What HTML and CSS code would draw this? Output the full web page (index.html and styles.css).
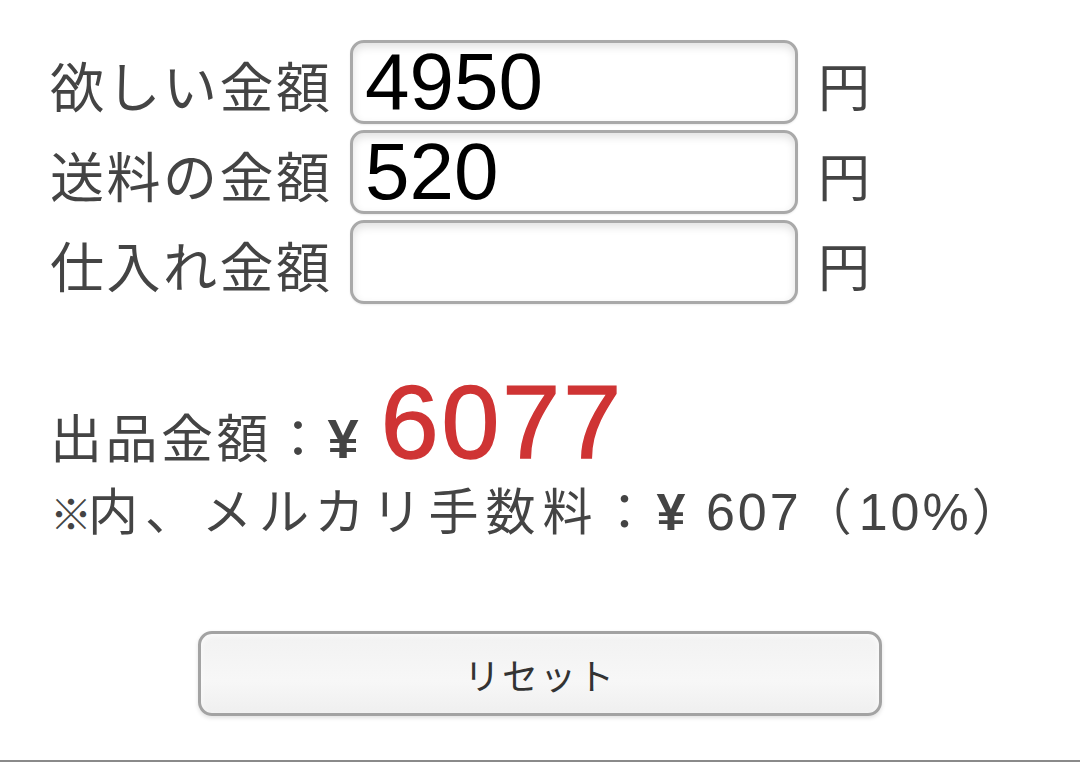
FILE: index.html
```html
<!DOCTYPE html>
<html lang="ja">
<head>
<meta charset="utf-8">
<title>出品金額計算</title>
<link rel="stylesheet" href="styles.css">
</head>
<body>
<main class="page">
  <form class="calc">
    <div class="row">
      <label class="label" for="want">欲しい金額</label>
      <input class="field" id="want" type="text" value="4950">
      <span class="unit">円</span>
    </div>
    <div class="row">
      <label class="label" for="ship">送料の金額</label>
      <input class="field" id="ship" type="text" value="520">
      <span class="unit">円</span>
    </div>
    <div class="row">
      <label class="label" for="cost">仕入れ金額</label>
      <input class="field" id="cost" type="text" value="">
      <span class="unit">円</span>
    </div>
  </form>
  <section class="result">
    <div class="price-line">出品金額：<span class="yen-big">¥</span><span class="price">6077</span></div>
    <div class="fee-line"><span class="mark">※</span>内、メルカリ手数料：<span class="num"><b class="yen">¥</b> 607</span>（<span class="num">10%</span>）</div>
  </section>
  <div class="actions">
    <button class="reset" type="button">リセット</button>
  </div>
</main>
<div class="rule"></div>
</body>
</html>
```
FILE: styles.css
```css
html, body {
  margin: 0;
  padding: 0;
  background: #ffffff;
}
body {
  width: 1080px;
  height: 762px;
  overflow: hidden;
  position: relative;
  font-family: "Liberation Sans", "Noto Sans CJK JP", sans-serif;
  color: #444444;
}
.page {
  padding: 40px 0 0 50px;
  height: 720px;
  box-sizing: border-box;
}
.calc {
  display: flex;
  flex-direction: column;
  gap: 6px;
}
.row {
  display: grid;
  grid-template-columns: 300px 448px auto;
  align-items: center;
  height: 84px;
}
.label {
  font-family: "Noto Sans CJK JP", sans-serif;
  font-size: 54px;
  letter-spacing: 2.5px;
  line-height: 1;
  padding-top: 6px;
  color: #444444;
  white-space: nowrap;
}
.field {
  box-sizing: border-box;
  width: 448px;
  height: 84px;
  margin: 0;
  padding: 0 12px;
  border: 3px solid #a9a9a9;
  border-radius: 14px;
  background: #ffffff;
  box-shadow: inset 0 4px 8px rgba(0,0,0,0.12), 0 1px 2px rgba(0,0,0,0.08);
  font-family: "Liberation Sans", sans-serif;
  font-size: 80px;
  color: #000000;
  outline: none;
}
.unit {
  font-family: "Noto Sans CJK JP", sans-serif;
  font-size: 52px;
  line-height: 1;
  padding-left: 20px;
  padding-top: 6px;
  color: #444444;
}
.result {
  margin-top: 78px;
}
.price-line {
  font-family: "Noto Sans CJK JP", sans-serif;
  font-size: 52px;
  letter-spacing: 3.5px;
  line-height: 80px;
  height: 80px;
  white-space: nowrap;
}
.yen-big {
  font-family: "Liberation Sans", sans-serif;
  font-weight: bold;
  font-size: 56px;
  letter-spacing: 0;
}
.price {
  font-family: "Liberation Sans", sans-serif;
  font-size: 104px;
  letter-spacing: 3px;
  color: #cf3434;
  -webkit-text-stroke: 1.5px #cf3434;
  margin-left: 22px;
}
.fee-line {
  margin-top: 11px;
  font-family: "Noto Sans CJK JP", sans-serif;
  font-size: 50px;
  letter-spacing: 7px;
  line-height: 70px;
  height: 70px;
  white-space: nowrap;
}
.mark {
  font-size: 42px;
  letter-spacing: 0;
  font-weight: bold;
  margin-right: -4px;
}
.num {
  font-family: "Liberation Sans", sans-serif;
  font-size: 52px;
  letter-spacing: 3px;
}
.yen {
  font-weight: bold;
}
.actions {
  margin-top: 88px;
  padding-left: 148px;
}
.reset {
  box-sizing: border-box;
  width: 684px;
  height: 85px;
  border: 3px solid #a3a3a3;
  border-radius: 14px;
  background: linear-gradient(#f2f2f2, #f7f7f7 60%, #efefef);
  box-shadow: inset 0 2px 6px rgba(255,255,255,0.8), 0 2px 4px rgba(0,0,0,0.12);
  font-family: "Noto Sans CJK JP", sans-serif;
  font-size: 36px;
  letter-spacing: 2px;
  color: #333333;
  cursor: pointer;
}
.rule {
  position: absolute;
  left: 0;
  right: 0;
  bottom: 0;
  height: 2px;
  background: #8a8a8a;
}
```
